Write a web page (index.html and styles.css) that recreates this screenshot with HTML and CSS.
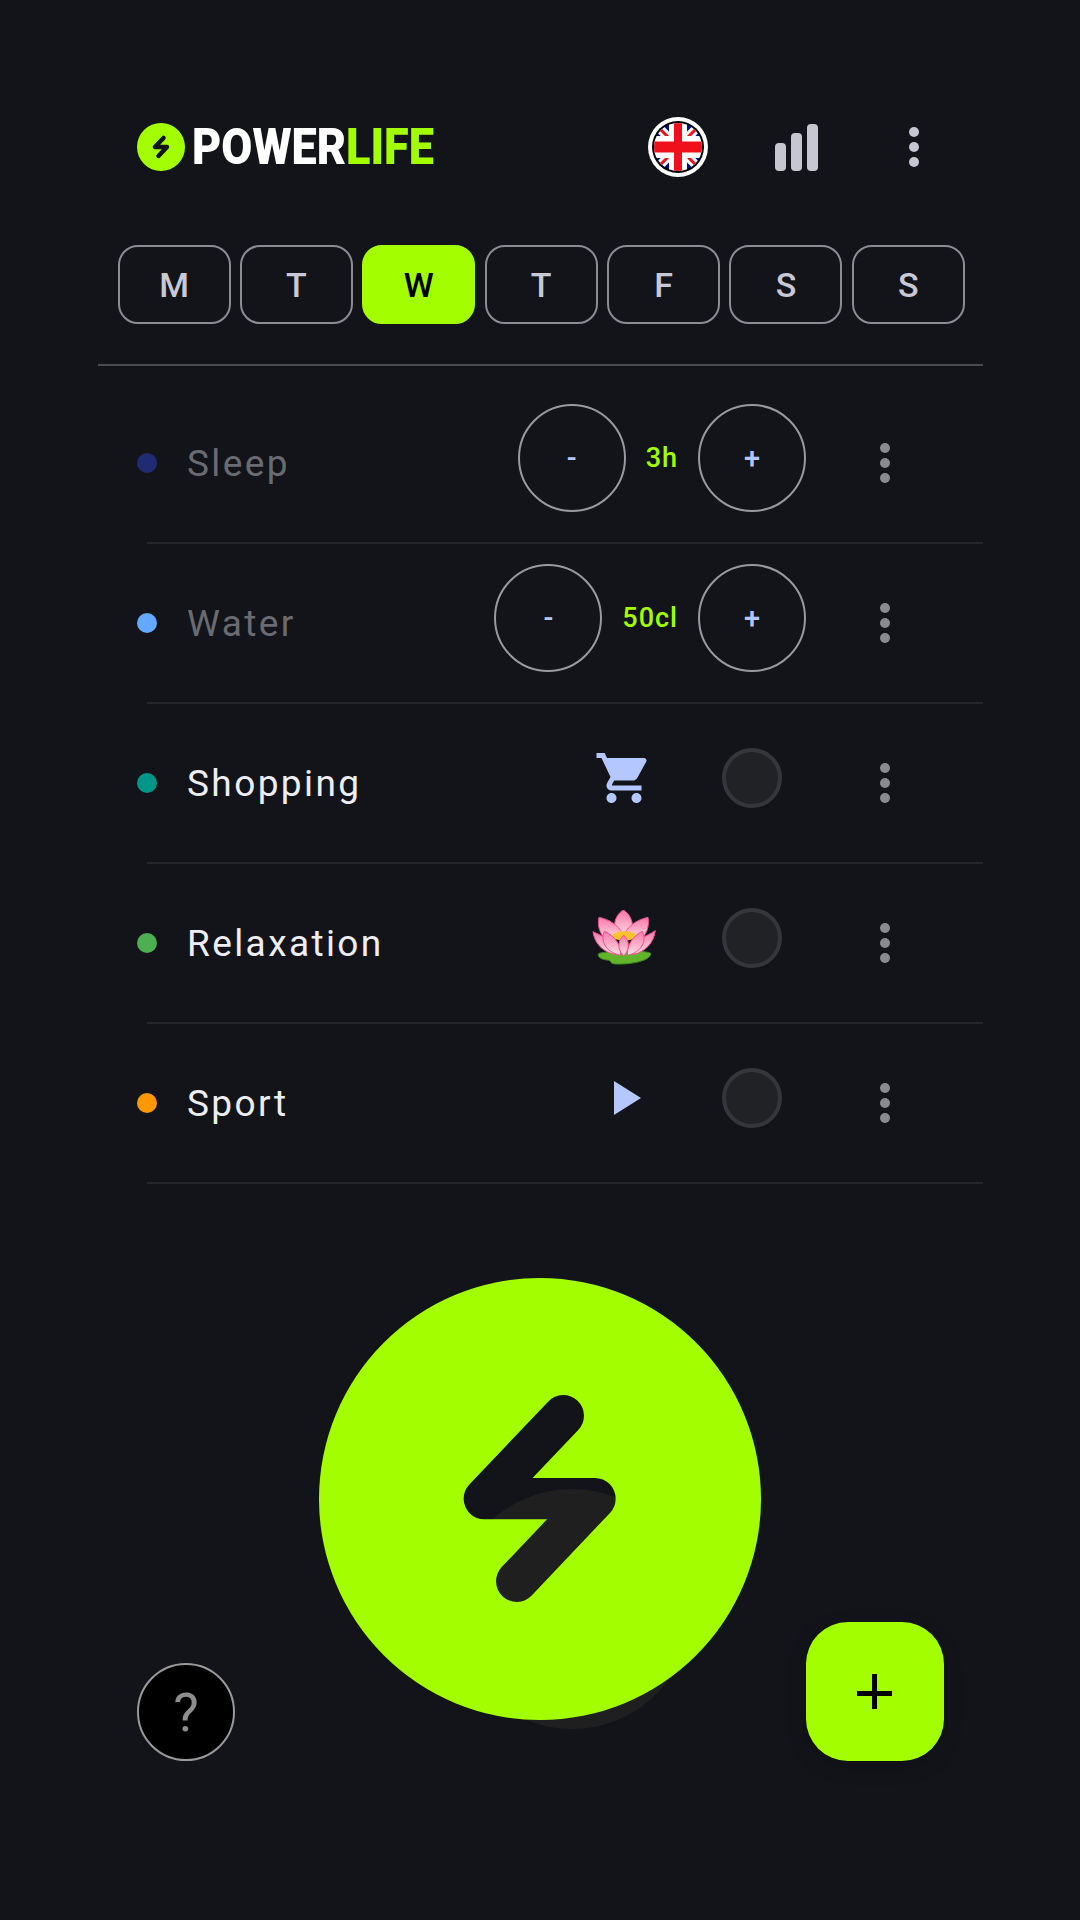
FILE: index.html
```html
<!DOCTYPE html>
<html lang="en">
<head>
    <meta charset="UTF-8">
    <meta name="viewport" content="width=device-width, initial-scale=1.0">
    <title>PowerLife</title>
    <link rel="stylesheet" href="styles.css">
</head>
<body>
    <header class="header">
        <div class="logo">
            <svg class="logo-mark" viewBox="0 0 442 442">
                <circle cx="221" cy="221" r="221" fill="#a3ff00"/>
                <polyline points="244.3,137.7 165.3,220.7 276,220.7 197.7,303.3" fill="none" stroke="#12141a" stroke-width="41.3" stroke-linecap="round" stroke-linejoin="round"/>
            </svg>
            <div class="logo-text">POWER<span class="logo-accent">LIFE</span></div>
        </div>
        <div class="header-actions">
            <div class="header-slot">
                <!-- Flag -->
                <svg class="flag" viewBox="0 0 60 60">
                    <defs><clipPath id="flagClip"><circle cx="30" cy="30" r="24"/></clipPath></defs>
                    <circle cx="30" cy="30" r="30" fill="#fff"/>
                    <circle cx="30" cy="30" r="26" fill="#000"/>
                    <g clip-path="url(#flagClip)">
                        <rect width="60" height="60" fill="#00107e"/>
                        <path d="M6 6L54 54M54 6L6 54" stroke="#fff" stroke-width="9"/>
                        <path d="M6 6L54 54M54 6L6 54" stroke="#f0101c" stroke-width="3"/>
                        <rect x="21" y="0" width="18" height="60" fill="#fff"/>
                        <rect x="0" y="19" width="60" height="22" fill="#fff"/>
                        <rect x="26" y="0" width="8" height="60" fill="#f0101c"/>
                        <rect x="0" y="24.5" width="60" height="11" fill="#f0101c"/>
                    </g>
                </svg>
            </div>
            <div class="header-slot">
                <div class="bars">
                    <span class="bar bar-low"></span>
                    <span class="bar bar-mid"></span>
                    <span class="bar bar-high"></span>
                </div>
            </div>
            <div class="header-slot">
                <div class="menu menu-light"><span></span><span></span><span></span></div>
            </div>
        </div>
    </header>

    <nav class="days">
        <button class="day">M</button>
        <button class="day">T</button>
        <button class="day active">W</button>
        <button class="day">T</button>
        <button class="day">F</button>
        <button class="day">S</button>
        <button class="day">S</button>
    </nav>

    <div class="main-divider"></div>

    <section class="list">
        <div class="row">
            <span class="dot dot-sleep"></span>
            <span class="label muted">Sleep</span>
            <div class="controls">
                <button class="round">-</button>
                <span class="value">3h</span>
                <button class="round">+</button>
            </div>
            <div class="menu"><span></span><span></span><span></span></div>
        </div>
        <div class="row">
            <span class="dot dot-water"></span>
            <span class="label muted">Water</span>
            <div class="controls">
                <button class="round">-</button>
                <span class="value">50cl</span>
                <button class="round">+</button>
            </div>
            <div class="menu"><span></span><span></span><span></span></div>
        </div>
        <div class="row">
            <span class="dot dot-shopping"></span>
            <span class="label">Shopping</span>
            <div class="controls">
                <div class="task-icon">
                    <svg class="cart" viewBox="0 0 24 24"><path fill="#b4c8ff" d="M7 18c-1.1 0-1.99.9-1.99 2S5.9 22 7 22s2-.9 2-2-.9-2-2-2zM1 2v2h2l3.6 7.59-1.35 2.45c-.16.28-.25.61-.25.96 0 1.1.9 2 2 2h12v-2H7.42c-.14 0-.25-.11-.25-.25l.03-.12.9-1.63h7.45c.75 0 1.41-.41 1.75-1.03l3.58-6.49c.08-.14.12-.31.12-.48 0-.55-.45-1-1-1H5.21l-.94-2H1zm16 16c-1.1 0-1.99.9-1.99 2s.89 2 1.99 2 2-.9 2-2-.9-2-2-2z"/></svg>
                </div>
                <div class="toggle-slot"><span class="toggle"></span></div>
            </div>
            <div class="menu"><span></span><span></span><span></span></div>
        </div>
        <div class="row">
            <span class="dot dot-relax"></span>
            <span class="label">Relaxation</span>
            <div class="controls">
                <div class="task-icon">
                    <!-- Lotus -->
                    <svg class="lotus" viewBox="21 20 192 165">
                        <defs>
                            <linearGradient id="petal" x1="0" y1="0" x2="0" y2="1">
                                <stop offset="0" stop-color="#f977ab"/>
                                <stop offset="1" stop-color="#ffdfe2"/>
                            </linearGradient>
                        </defs>
                        <path d="M40 152C46 142 190 140 197 150C200 168 150 184 92 182C70 180 84 172 66 170C50 168 38 162 40 152Z" fill="#62b52b" stroke="#3f8f1c" stroke-width="3"/>
                        <g fill="url(#petal)" stroke="#ee4f8f" stroke-width="3" stroke-linejoin="round">
                            <path d="M115 20C98 30 84 52 90 82L115 102L142 82C146 52 132 30 115 20Z"/>
                            <path d="M42 42C36 66 44 94 66 112L112 90C100 66 72 48 42 42Z"/>
                            <path d="M189 42C194 66 186 94 164 112L120 90C130 66 160 48 189 42Z"/>
                            <path d="M24 85C28 118 52 146 92 154L70 108C58 100 38 92 24 85Z"/>
                            <path d="M211 82C206 118 182 146 142 154L164 108C176 100 196 92 211 82Z"/>
                        </g>
                        <ellipse cx="118" cy="98" rx="36" ry="14" fill="#fcc22e"/>
                        <g fill="url(#petal)" stroke="#ee4f8f" stroke-width="3" stroke-linejoin="round">
                            <path d="M58 84C46 110 60 146 106 156C112 132 90 96 58 84Z"/>
                            <path d="M172 84C186 110 172 146 128 156C122 132 144 96 172 84Z"/>
                            <path d="M116 96C98 110 96 138 116 158C136 138 134 110 116 96Z"/>
                        </g>
                    </svg>
                </div>
                <div class="toggle-slot"><span class="toggle"></span></div>
            </div>
            <div class="menu"><span></span><span></span><span></span></div>
        </div>
        <div class="row">
            <span class="dot dot-sport"></span>
            <span class="label">Sport</span>
            <div class="controls">
                <div class="task-icon">
                    <svg class="play" viewBox="0 0 27 34"><path fill="#b4c8ff" d="M0 0L27 17L0 34Z"/></svg>
                </div>
                <div class="toggle-slot"><span class="toggle"></span></div>
            </div>
            <div class="menu"><span></span><span></span><span></span></div>
        </div>
    </section>

    <footer class="footer">
        <button class="help">?</button>
        <!-- Power button, the bolt is a hole so the shadow shows through -->
        <svg class="power" viewBox="0 0 442 442">
            <defs>
                <mask id="boltHole" maskUnits="userSpaceOnUse" x="0" y="0" width="442" height="442">
                    <rect width="442" height="442" fill="#fff"/>
                    <polyline points="244.3,137.7 165.3,220.7 276,220.7 197.7,303.3" fill="none" stroke="#000" stroke-width="41.3" stroke-linecap="round" stroke-linejoin="round"/>
                </mask>
            </defs>
            <circle cx="253" cy="331" r="120" fill="#1f1f1f"/>
            <circle cx="221" cy="221" r="221" fill="#a3ff00" mask="url(#boltHole)"/>
        </svg>
        <button class="add"><span class="add-h"></span><span class="add-v"></span></button>
    </footer>
</body>
</html>
```

FILE: styles.css
```css
* {
    box-sizing: border-box;
}

body {
    margin: 0;
    width: 1080px;
    height: 1920px;
    overflow: hidden;
    background-color: #12141a;
    font-family: 'Roboto', sans-serif;
}

button {
    font-family: 'Roboto', sans-serif;
    padding: 0;
    background: none;
    cursor: pointer;
}

/* Header */
.header {
    display: flex;
    align-items: center;
    justify-content: space-between;
    height: 60px;
    margin-top: 117px;
    padding: 0 107px 0 137px;
}

.logo {
    display: flex;
    align-items: center;
    gap: 7px;
}

.logo-mark {
    width: 48px;
    height: 48px;
}

.logo-text {
    font-size: 50px;
    font-weight: 900;
    line-height: 50px;
    color: #fff;
    width: 241px;
    white-space: nowrap;
    transform: scaleX(0.9);
    transform-origin: left center;
}

.logo-accent {
    color: #a3ff00;
}

.header-actions {
    display: flex;
}

.header-slot {
    width: 118px;
    display: flex;
    justify-content: center;
    align-items: center;
}

.flag {
    width: 60px;
    height: 60px;
}

.bars {
    display: flex;
    align-items: flex-end;
    gap: 5px;
    height: 47px;
}

.bar {
    width: 11px;
    border-radius: 4px;
    background-color: #c5c6d0;
}

.bar-low {
    height: 28px;
}

.bar-mid {
    height: 38px;
}

.bar-high {
    height: 47px;
}

/* Three dots */
.menu {
    display: flex;
    flex-direction: column;
    gap: 5px;
    width: 10px;
    margin-left: 74px;
    margin-right: 93px;
}

.menu span {
    width: 10px;
    height: 10px;
    border-radius: 50%;
    background-color: #8b8b8f;
}

.menu-light {
    margin: 0;
}

.menu-light span {
    background-color: #c5c6d0;
}

/* Days */
.days {
    display: flex;
    gap: 9.4px;
    margin-top: 68px;
    padding-left: 117.5px;
}

.day {
    width: 113px;
    height: 79px;
    border: 2px solid #8c8c93;
    border-radius: 20px;
    font-size: 34px;
    font-weight: 500;
    color: #c8c9d4;
}

.day.active {
    background-color: #a3ff00;
    border-color: #a3ff00;
    color: #000;
}

.main-divider {
    height: 2px;
    margin: 40px 97px 18px 98px;
    background-color: #4a4b50;
}

/* Rows */
.row {
    display: flex;
    align-items: center;
    height: 160px;
    margin: 0 97px 0 147px;
    border-bottom: 2px solid #25262a;
}

.dot {
    width: 20px;
    height: 20px;
    margin-left: -10px;
    border-radius: 50%;
    flex-shrink: 0;
}

.dot-sleep {
    background-color: #1f2c73;
}

.dot-water {
    background-color: #63a9ff;
}

.dot-shopping {
    background-color: #009688;
}

.dot-relax {
    background-color: #4caf50;
}

.dot-sport {
    background-color: #ff9800;
}

.label {
    margin-left: 30px;
    font-size: 37px;
    letter-spacing: 2.4px;
    color: #eeeef2;
}

.label.muted {
    color: #6a6b70;
}

.controls {
    display: flex;
    align-items: center;
    margin-left: auto;
    margin-bottom: 11px;
}

.round {
    width: 108px;
    height: 108px;
    border: 2px solid #9a9a9e;
    border-radius: 50%;
    font-size: 29px;
    font-weight: 500;
    color: #b4c8ff;
}

.value {
    margin: 0 20px;
    font-size: 27px;
    font-weight: 500;
    letter-spacing: 1px;
    color: #a3ff00;
}

.task-icon {
    width: 64px;
    margin-right: 42px;
    display: flex;
    justify-content: center;
    align-items: center;
}

.cart {
    width: 60px;
    height: 60px;
    flex-shrink: 0;
}

.lotus {
    width: 64px;
    height: 55px;
}

.play {
    width: 27px;
    height: 34px;
    margin-left: 7px;
}

.toggle-slot {
    width: 108px;
    display: flex;
    justify-content: center;
}

.toggle {
    width: 60px;
    height: 60px;
    border: 4px solid #35363a;
    border-radius: 50%;
    background-color: #212226;
}

/* Bottom buttons */
.footer {
    display: flex;
    align-items: flex-end;
    margin-top: 94px;
    padding-left: 137px;
}

.help {
    width: 98px;
    height: 98px;
    border: 2.5px solid #9a9a9a;
    border-radius: 50%;
    background-color: #000;
    font-size: 54px;
    color: #8e8e8e;
}

.power {
    width: 442px;
    height: 442px;
    margin: 0 45px 41px 84px;
    overflow: visible;
}

.add {
    position: relative;
    width: 138px;
    height: 139px;
    border: none;
    border-radius: 42px;
    background-color: #a3ff00;
    box-shadow: 0 6px 20px rgba(0, 0, 0, 0.15);
}

/* Plus sign of the add button */
.add-h,
.add-v {
    position: absolute;
    background-color: #000;
}

.add-h {
    left: 51px;
    top: 69px;
    width: 35px;
    height: 5px;
}

.add-v {
    left: 66px;
    top: 52px;
    width: 5px;
    height: 35px;
}
```
